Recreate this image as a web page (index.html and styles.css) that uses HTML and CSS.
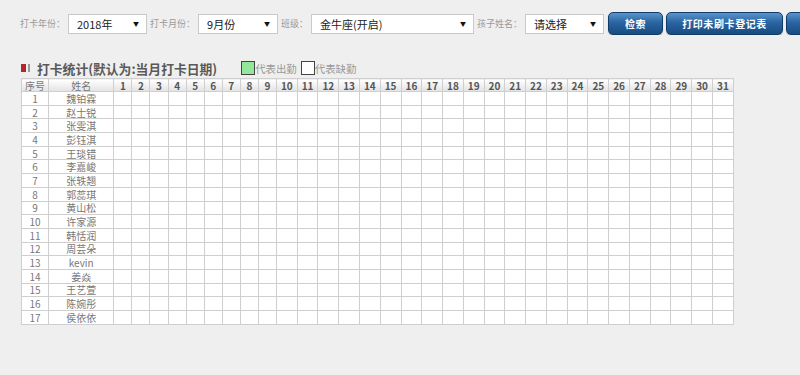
FILE: index.html
```html
<!DOCTYPE html>
<html lang="zh">
<head>
    <meta charset="UTF-8">
    <title>打卡统计</title>
    <link rel="stylesheet" href="styles.css">
</head>
<body>
    <div class="toolbar">
        <span class="label">打卡年份：</span>
        <div class="select w-year"><span>2018年</span><i>▼</i></div>
        <span class="label">打卡月份：</span>
        <div class="select w-month"><span>9月份</span><i>▼</i></div>
        <span class="label">班级：</span>
        <div class="select w-class"><span>金牛座(开启)</span><i>▼</i></div>
        <span class="label">孩子姓名：</span>
        <div class="select w-child"><span>请选择</span><i>▼</i></div>
        <button class="btn btn-search">检索</button>
        <button class="btn btn-print">打印未刷卡登记表</button>
        <button class="btn btn-export"></button>
    </div>

    <div class="title-row">
        <span class="mark"><b></b><em></em></span>
        <h3>打卡统计(默认为:当月打卡日期)</h3>
        <span class="legend"><i class="box on"></i>代表出勤<i class="box off"></i>代表缺勤</span>
    </div>

    <table class="grid">
        <colgroup>
            <col class="c-no"><col class="c-name">
            <col class="c-d1" span="9"><col class="c-d2" span="22">
        </colgroup>
        <thead>
            <tr id="headRow"><th>序号</th><th>姓名</th></tr>
        </thead>
        <tbody id="rows"></tbody>
    </table>

    <script>
        var names = ['魏铂霖', '赵士锐', '张雯淇', '彭钰淇', '王琰错', '李嘉峻', '张轶翘', '郭蕊琪', '黄山松',
            '许家源', '韩恬润', '周芸朵', 'kevin', '姜焱', '王艺萱', '陈婉彤', '侯依依'];
        var head = document.getElementById('headRow');
        for (var d = 1; d <= 31; d++) {
            var th = document.createElement('th');
            th.textContent = d;
            head.appendChild(th);
        }
        var body = document.getElementById('rows');
        names.forEach(function (n, i) {
            var tr = document.createElement('tr');
            var html = '<td>' + (i + 1) + '</td><td>' + n + '</td>';
            for (var d = 1; d <= 31; d++) html += '<td></td>';
            tr.innerHTML = html;
            body.appendChild(tr);
        });
    </script>
</body>
</html>
```

FILE: styles.css
```css
body {
    margin: 0;
    background: #efefef;
    font-family: "Noto Sans CJK SC", "Liberation Sans", sans-serif;
    color: #666;
    overflow: hidden;
}
.toolbar {
    display: flex;
    align-items: center;
    padding: 12px 0 0 20px;
    height: 23px;
    white-space: nowrap;
    overflow: hidden;
}
.toolbar > * {
    flex-shrink: 0;
}
.label {
    font-size: 9px;
    color: #999;
    margin-right: 3px;
}
.select {
    display: flex;
    align-items: center;
    justify-content: space-between;
    box-sizing: border-box;
    height: 20px;
    padding: 0 7px 0 8px;
    margin-right: 3px;
    background: #fff;
    border: 1px solid #c9c9c9;
    font-size: 11px;
    color: #222;
}
.select i {
    font-style: normal;
    font-size: 6px;
    color: #111;
}
.w-year { width: 79px; }
.w-month { width: 80px; }
.w-class { width: 163px; }
.w-child { width: 79px; }
.btn {
    height: 23px;
    margin-left: 3px;
    padding: 0;
    border: 1px solid #0f3c69;
    border-radius: 5px;
    background: linear-gradient(#5b93cc, #2a65a2 45%, #184c80);
    color: #fff;
    font-family: inherit;
    font-size: 10px;
    font-weight: bold;
    letter-spacing: 0.6px;
    box-shadow: 0 1px 1px rgba(0, 0, 0, 0.25);
}
.btn-search { width: 55px; margin-left: 1px; }
.btn-print { width: 117px; }
.btn-export { width: 110px; }

.title-row {
    display: flex;
    align-items: center;
    height: 18px;
    margin: 24px 0 0 21px;
}
.mark {
    display: flex;
    gap: 2px;
    margin-right: 7px;
}
.mark b {
    width: 5px;
    height: 8px;
    background: #b2262c;
}
.mark em {
    width: 2px;
    height: 8px;
    background: #9a9a9a;
}
.title-row h3 {
    margin: 0;
    font-size: 12.8px;
    font-weight: bold;
    color: #595959;
}
.legend {
    display: flex;
    align-items: center;
    margin-left: 24px;
    font-size: 10.4px;
    color: #999;
}
.box {
    box-sizing: border-box;
    width: 14px;
    height: 14px;
    border: 1px solid #444;
}
.box.on { background: #93e69a; }
.box.off { background: #fff; margin-left: 4px; }

.grid {
    margin: 1px 0 0 21px;
    border-collapse: collapse;
    table-layout: fixed;
    width: 713px;
    background: #fff;
}
.c-no { width: 27px; }
.c-name { width: 65px; }
.c-d1 { width: 18px; }
.c-d2 { width: 20.7px; }
.grid th,
.grid td {
    border: 1px solid #cfcfcf;
    padding: 0;
    text-align: center;
    font-size: 10px;
    line-height: 11px;
    height: 12.7px;
    overflow: hidden;
}
.grid th {
    height: 12px;
    background: linear-gradient(#ffffff, #e3e3e3);
    color: #555;
    font-weight: bold;
}
.grid th:nth-child(-n+2) {
    font-weight: normal;
    color: #777;
}
.grid td {
    color: #777;
}
```
